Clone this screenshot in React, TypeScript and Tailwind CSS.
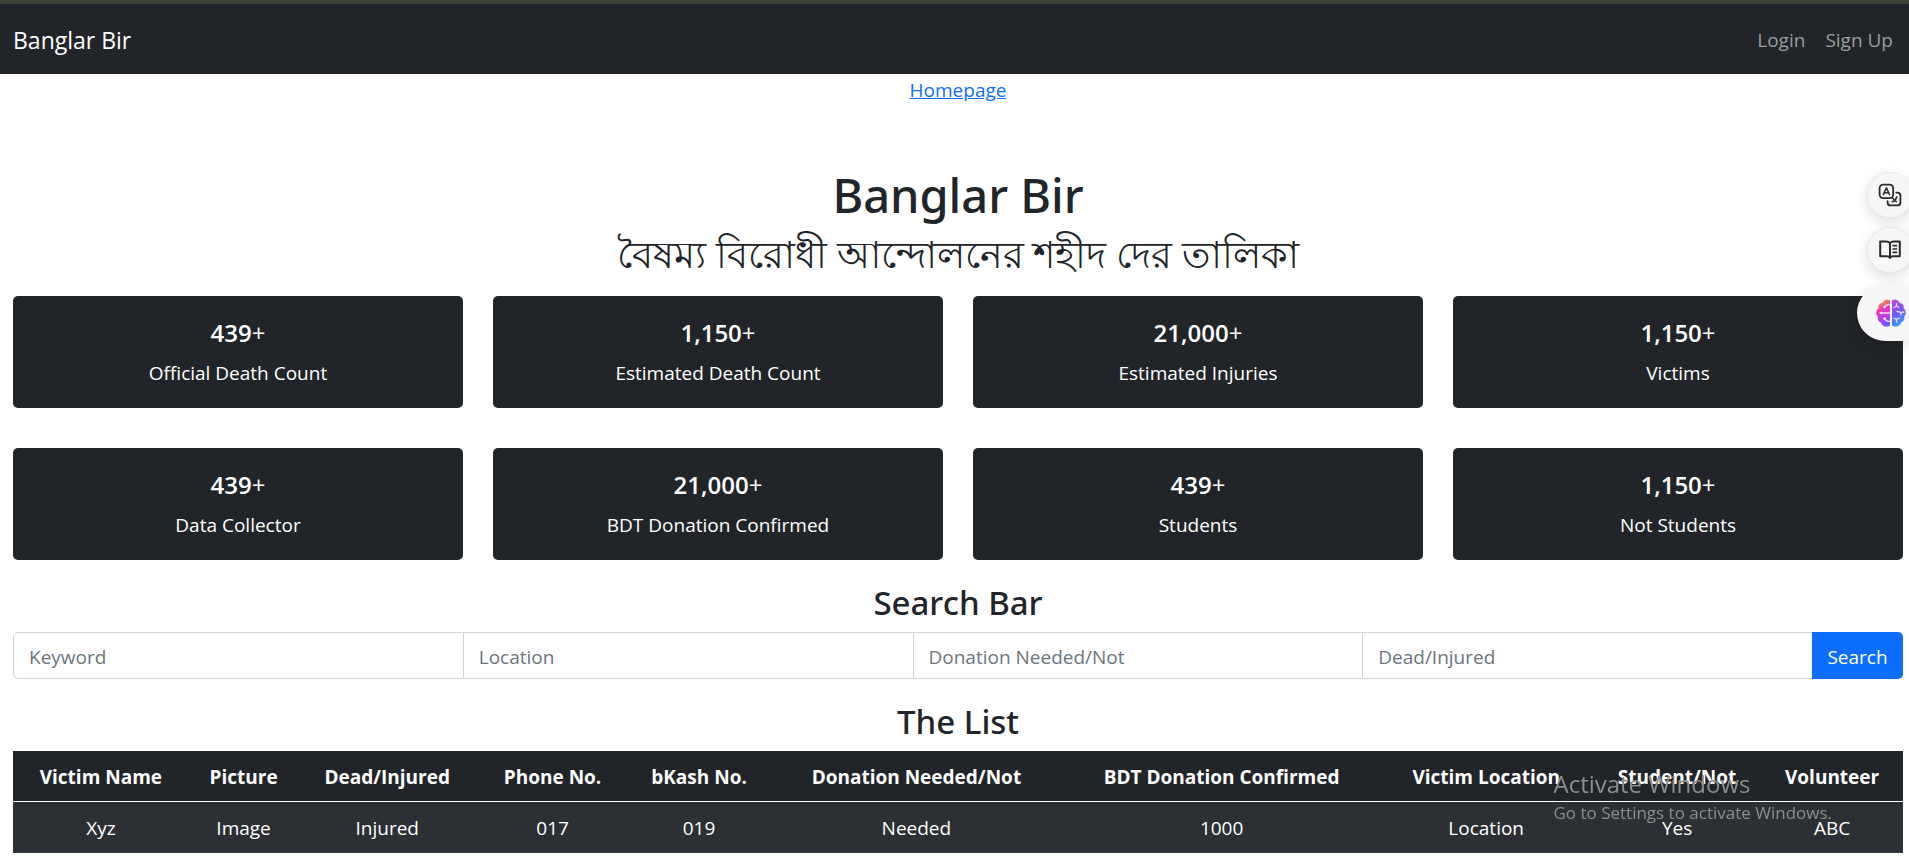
const stats = [
  { value: "439", label: "Official Death Count" },
  { value: "1,150", label: "Estimated Death Count" },
  { value: "21,000", label: "Estimated Injuries" },
  { value: "1,150", label: "Victims" },
  { value: "439", label: "Data Collector" },
  { value: "21,000", label: "BDT Donation Confirmed" },
  { value: "439", label: "Students" },
  { value: "1,150", label: "Not Students" },
];

const columns = [
  { title: "Victim Name", value: "Xyz", width: "w-[9.3%]" },
  { title: "Picture", value: "Image", width: "w-[5.8%]" },
  { title: "Dead/Injured", value: "Injured", width: "w-[9.4%]" },
  { title: "Phone No.", value: "017", width: "w-[8.1%]" },
  { title: "bKash No.", value: "019", width: "w-[7.4%]" },
  { title: "Donation Needed/Not", value: "Needed", width: "w-[15.6%]" },
  { title: "BDT Donation Confirmed", value: "1000", width: "w-[16.7%]" },
  { title: "Victim Location", value: "Location", width: "w-[11.3%]" },
  { title: "Student/Not", value: "Yes", width: "w-[8.9%]" },
  { title: "Volunteer", value: "ABC", width: "w-[7.5%]" },
];

const filters = ["Keyword", "Location", "Donation Needed/Not", "Dead/Injured"];

function TranslateIcon() {
  return (
    <svg width="24" height="24" viewBox="0 0 24 24" fill="none" stroke="#2b2b2b" strokeWidth="1.8" strokeLinecap="round" strokeLinejoin="round" aria-hidden="true">
      <rect x="1.6" y="1.6" width="13.6" height="13.6" rx="3.6" />
      <path d="M5.2 11.6 8.4 4.9l3.2 6.7M6.2 9.7h4.4" strokeWidth="1.5" />
      <path d="M18.2 9.6h1.2a3 3 0 0 1 3 3v6.8a3 3 0 0 1-3 3h-6.8a3 3 0 0 1-3-3v-1.2" />
      <path d="M14.4 18.8c2-.7 3.6-2.4 4.4-5M14.8 15.2c.8 1.6 2 2.8 3.8 3.4" strokeWidth="1.5" />
    </svg>
  );
}

function BookIcon() {
  return (
    <svg width="22" height="20" viewBox="0 0 22 20" fill="none" stroke="#2b2b2b" strokeWidth="2" strokeLinejoin="round" aria-hidden="true">
      <path d="M11 3.2C10 2 8.8 1.500 7.200 1.500H1.200v14.800h6.600c1.500 0 2.600.5 3.200 1.500.6-1 1.700-1.500 3.200-1.500h6.600V1.500h-6c-1.600 0-2.800.5-3.800 1.700Zm0 0v15.600" />
      <path d="M13.4 5.6h4.8M13.4 9h4.8M13.4 12.4h4.8" strokeWidth="1.6" />
    </svg>
  );
}

function BrainIcon() {
  return (
    <svg width="30" height="28" viewBox="0 0 30 28" fill="none" aria-hidden="true">
      <defs>
        <linearGradient id="brain-left" x1="3" y1="2" x2="14" y2="27" gradientUnits="userSpaceOnUse">
          <stop offset="0" stopColor="#ff9a2e" />
          <stop offset="0.35" stopColor="#f034c0" />
          <stop offset="0.75" stopColor="#a045f0" />
          <stop offset="1" stopColor="#5a62fa" />
        </linearGradient>
        <linearGradient id="brain-right" x1="17" y1="1" x2="28" y2="26" gradientUnits="userSpaceOnUse">
          <stop offset="0" stopColor="#c343dd" />
          <stop offset="0.5" stopColor="#7359f4" />
          <stop offset="1" stopColor="#2ba6ff" />
        </linearGradient>
      </defs>
      <path fill="url(#brain-left)" d="M14 1.500C11.500-.6 7.500.6 6.600 3.800 3.600 4 1.800 6.600 2.400 9.400.6 10.500-.2 13 .4 15.200c.3 1 .8 1.600 1.400 2-.6 3 .6 5.300 3 6.200 1.300 3.800 5.800 5.500 9.200 3Z" />
      <path fill="url(#brain-right)" d="M16 1.500c2.500-2.100 6.500-.9 7.400 2.300 3 .2 4.800 2.800 4.200 5.600 1.800 1.100 2.600 3.600 2 5.800-.3 1-.8 1.600-1.400 2 .6 3-.6 5.300-3 6.200-1.300 3.800-5.800 5.500-9.200 3Z" />
      <path stroke="#fff" strokeOpacity="0.8" strokeWidth="1.3" strokeLinecap="round" d="M14 5.500c-3-.2-4.500.8-5.500 2.500M14 14H4.500M14 22.500c-3 .2-4.500-1-5.500-3M20.500 4.500V7l-2.500 1.500M20.500 7 23 8.500M21 12.500c2 0 3.500.5 4 1.500 1-.8 2-1 3-1M25 14v2M18 19l2.500 1.500 3-1.500M20.500 20.500V23" />
      <g fill="#fff" fillOpacity="0.9">
        <circle cx="8.5" cy="8" r="1.2" />
        <circle cx="4.8" cy="14" r="1.2" />
        <circle cx="8.5" cy="19.5" r="1.2" />
      </g>
    </svg>
  );
}

export default function App() {
  return (
    <div className="min-h-screen bg-white font-['Open_Sans','Noto_Sans',sans-serif] text-[19px] leading-[30px] text-[#212529]">
      <nav className="flex h-[74px] items-center justify-between border-t-4 border-[#3b4034] bg-[#212529] px-[13px] pt-0.5">
        <a href="#" className="text-[23px] text-white">Banglar Bir</a>
        <div className="flex gap-5 pr-[3px] text-[#9b9d9f]">
          <a href="#login">Login</a>
          <a href="#signup">Sign Up</a>
        </div>
      </nav>

      <main className="pt-px pr-1.5 pl-[13px] text-center">
        <a href="#home" className="text-[#0d6efd] underline">Homepage</a>

        <h1 className="mt-[60px] font-['Noto_Sans',sans-serif] text-[47px] leading-[60px] font-medium">Banglar Bir</h1>
        <p lang="bn" className="mt-1 text-[38px] leading-[48px]">বৈষম্য বিরোধী আন্দোলনের শহীদ দের তালিকা</p>

        <section className="mt-[19px] grid grid-cols-4 gap-x-[30px] gap-y-10">
          {stats.map((stat) => (
            <div key={stat.label} className="flex h-28 flex-col items-center justify-center gap-2.5 rounded-[5px] bg-[#212529] pt-0.5 text-white">
              <p className="text-[24px] leading-[30px]"><span className="font-semibold">{stat.value}</span>+</p>
              <p>{stat.label}</p>
            </div>
          ))}
        </section>

        <h2 className="mt-[22px] font-['Noto_Sans',sans-serif] text-[33px] leading-[42px] font-medium">Search Bar</h2>
        <form className="mt-2 flex h-[47px]" onSubmit={(event) => event.preventDefault()}>
          {filters.map((name) => (
            <input
              key={name}
              type="text"
              aria-label={name}
              placeholder={name}
              className="-mr-px min-w-0 flex-1 border border-[#ced4da] px-[15px] pt-0.5 outline-none placeholder:text-[#6c757d] first:rounded-l-[5px]"
            />
          ))}
          <button type="submit" className="relative w-[91px] rounded-r-[5px] bg-[#0d6efd] pt-0.5 text-white">Search</button>
        </form>

        <h2 className="mt-[22px] font-['Noto_Sans',sans-serif] text-[33px] leading-[42px] font-medium">The List</h2>
        <table className="mt-2 w-full table-fixed border-collapse text-white">
          <thead>
            <tr className="h-[50px] border-b border-white bg-[#212529]">
              {columns.map((column) => (
                <th key={column.title} scope="col" className={`${column.width} pt-0.5 font-bold whitespace-nowrap`}>{column.title}</th>
              ))}
            </tr>
          </thead>
          <tbody>
            <tr className="h-[51px] border-b border-[#373b3e] bg-[#2c3034]">
              {columns.map((column) => (
                <td key={column.title} className="pt-0.5">{column.value}</td>
              ))}
            </tr>
          </tbody>
        </table>
      </main>

      <aside className="fixed top-[172px] right-0 flex flex-col items-end">
        <button type="button" aria-label="Translate" className="-mr-1 flex size-[46px] items-center justify-center rounded-full border border-[#e8e8ee] bg-[#f7f7f8] shadow-[0_4px_14px_rgba(0,0,0,0.14)]">
          <TranslateIcon />
        </button>
        <button type="button" aria-label="Read" className="mt-[9px] -mr-1 flex size-[46px] items-center justify-center rounded-full border border-[#e8e8ee] bg-[#f7f7f8] shadow-[0_4px_14px_rgba(0,0,0,0.14)]">
          <BookIcon />
        </button>
        <button type="button" aria-label="Assistant" className="mt-3 flex h-14 w-[52px] items-center justify-end rounded-l-full bg-[#f7f7f8] pr-[3px] shadow-[0_4px_14px_rgba(0,0,0,0.14)]">
          <BrainIcon />
        </button>
      </aside>

      <aside className="pointer-events-none fixed right-[77px] bottom-[39px] whitespace-nowrap text-[#8b8d8f]">
        <p className="text-2xl leading-[34px]">Activate Windows</p>
        <p className="text-[17px] leading-6">Go to Settings to activate Windows.</p>
      </aside>
    </div>
  );
}
